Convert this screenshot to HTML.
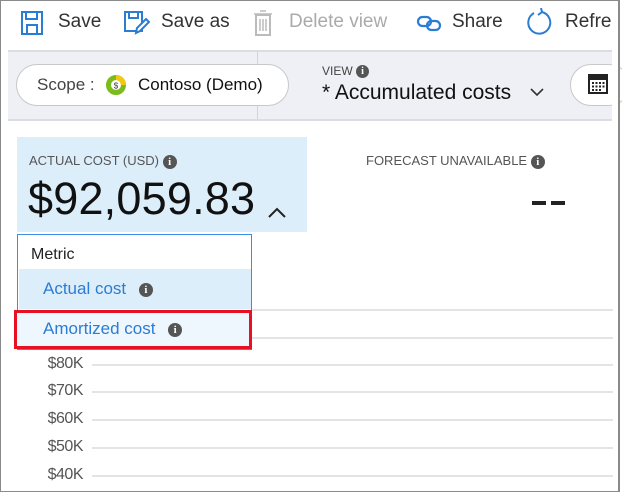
<!DOCTYPE html>
<html><head><meta charset="utf-8"><style>
*{margin:0;padding:0;box-sizing:border-box}
body{width:622px;height:493px;background:#fff;font-family:"Liberation Sans",sans-serif;position:relative;overflow:hidden}
.a{position:absolute;white-space:nowrap}
.frame{position:absolute;left:0;top:0;width:620px;height:492px;border:1px solid #8a8a8a;border-right:2px solid #8a8a8a}
.tb{font-size:19px;color:#333;top:11px}
.info{display:inline-block;width:14px;height:14px;border-radius:50%;background:#555;color:#fff;font:bold 11px/14px "Liberation Serif",serif;text-align:center;vertical-align:middle}
.grid{position:absolute;left:92px;width:521px;height:2px;background:#e4e4e4}
.yl{position:absolute;left:30px;width:53px;text-align:right;font-size:16px;color:#555;letter-spacing:-0.5px}
</style></head><body>
<svg class="a" style="left:21px;top:11px" width="22" height="24" viewBox="0 0 22 24"><rect x="1" y="1" width="20" height="22" fill="none" stroke="#2b7cd3" stroke-width="2"/><rect x="5" y="1" width="11" height="7" fill="none" stroke="#2b7cd3" stroke-width="2"/><rect x="6" y="14" width="10" height="9" fill="none" stroke="#2b7cd3" stroke-width="2"/></svg>
<div class="a tb" style="left:58px">Save</div>
<svg class="a" style="left:124px;top:11px" width="26" height="24" viewBox="0 0 26 24"><rect x="1" y="1" width="17" height="19" fill="none" stroke="#2b7cd3" stroke-width="2"/><rect x="5" y="1" width="9" height="6" fill="none" stroke="#2b7cd3" stroke-width="2"/><path d="M12 22 L13 17 L22 8 L25 11 L16 20 Z" fill="#fff" stroke="#2b7cd3" stroke-width="2"/></svg>
<div class="a tb" style="left:161px">Save as</div>
<svg class="a" style="left:254px;top:10px" width="18" height="26" viewBox="0 0 18 26"><rect x="2" y="5" width="14" height="20" fill="none" stroke="#bbb" stroke-width="2"/><path d="M0 4H18M6 1H12M6 9V21M9 9V21M12 9V21" stroke="#bbb" stroke-width="1.5"/></svg>
<div class="a tb" style="left:289px;color:#aaa">Delete view</div>
<svg class="a" style="left:416px;top:14px" width="26" height="18" viewBox="0 0 26 18"><rect x="2" y="3" width="13" height="9" rx="4.5" fill="none" stroke="#2b7cd3" stroke-width="2.2"/><rect x="11" y="7" width="13" height="9" rx="4.5" fill="none" stroke="#2b7cd3" stroke-width="2.2"/></svg>
<div class="a tb" style="left:452px">Share</div>
<svg class="a" style="left:525px;top:8px" width="28" height="30" viewBox="0 0 28 30"><path d="M9 5 A11 11 0 1 0 17 4" fill="none" stroke="#2b7cd3" stroke-width="2"/><path d="M16 0 L17 4 L13 7" fill="none" stroke="#2b7cd3" stroke-width="2"/></svg>
<div class="a tb" style="left:565px">Refre</div>
<div class="a" style="left:8px;top:50px;width:604px;height:71px;background:#eef0f6;border-top:2px solid #dcdde2;border-bottom:2px solid #dcdde2"></div>
<div class="a" style="left:257px;top:52px;width:1px;height:67px;background:#d4d4d8"></div>
<div class="a" style="left:16px;top:64px;width:273px;height:42px;border:1.5px solid #c8c8c8;border-radius:21px;background:#fff"></div>
<div class="a" style="left:37px;top:75px;font-size:17px;color:#444">Scope :</div>
<svg class="a" style="left:106px;top:75px" width="20" height="20" viewBox="0 0 20 20"><circle cx="10" cy="10" r="7.5" fill="none" stroke="#7cbb1c" stroke-width="5"/><path d="M10 2.5 A7.5 7.5 0 0 1 17.5 10" fill="none" stroke="#f2c811" stroke-width="5"/><text x="10" y="13.5" font-size="8" text-anchor="middle" font-family="Liberation Sans" fill="#333">$</text></svg>
<div class="a" style="left:138px;top:75px;font-size:17px;color:#111">Contoso (Demo)</div>
<div class="a" style="left:322px;top:64px;font-size:12px;color:#444">VIEW <span class="info" style="width:13px;height:13px;line-height:13px;font-size:10px">i</span></div>
<div class="a" style="left:322px;top:81px;font-size:21px;color:#111">* Accumulated costs</div>
<svg class="a" style="left:530px;top:88px" width="14" height="9" viewBox="0 0 14 9"><path d="M1 1 L7 7 L13 1" fill="none" stroke="#333" stroke-width="1.6"/></svg>
<div class="a" style="left:570px;top:64px;width:60px;height:42px;border:1.5px solid #c8c8c8;border-radius:21px;background:#fff"></div>
<svg class="a" style="left:588px;top:74px" width="20" height="20" viewBox="0 0 20 20"><rect x="1" y="1" width="18" height="18" fill="#fff" stroke="#222" stroke-width="2"/><rect x="1" y="1" width="18" height="5" fill="#222"/><g fill="#222"><rect x="4" y="8" width="2" height="2"/><rect x="7.5" y="8" width="2" height="2"/><rect x="11" y="8" width="2" height="2"/><rect x="14.5" y="8" width="2" height="2"/><rect x="4" y="11.5" width="2" height="2"/><rect x="7.5" y="11.5" width="2" height="2"/><rect x="11" y="11.5" width="2" height="2"/><rect x="14.5" y="11.5" width="2" height="2"/><rect x="4" y="15" width="2" height="2"/><rect x="7.5" y="15" width="2" height="2"/><rect x="11" y="15" width="2" height="2"/></g></svg>
<div class="a" style="left:612px;top:48px;width:8px;height:76px;background:#fff"></div>
<div class="a" style="left:17px;top:137px;width:290px;height:95px;background:#ddeefb"></div>
<div class="a" style="left:29px;top:153px;font-size:13px;color:#555">ACTUAL COST (USD) <span class="info">i</span></div>
<div class="a" style="left:28px;top:173px;font-size:45px;color:#111;letter-spacing:0.2px">$92,059.83</div>
<svg class="a" style="left:268px;top:207px" width="18" height="11" viewBox="0 0 18 11"><path d="M1 10 L9 2 L17 10" fill="none" stroke="#222" stroke-width="2"/></svg>
<div class="a" style="left:366px;top:153px;font-size:13px;color:#555">FORECAST UNAVAILABLE <span class="info">i</span></div>
<div class="a" style="left:532px;top:201px;width:14px;height:4px;background:#222"></div>
<div class="a" style="left:551px;top:201px;width:14px;height:4px;background:#222"></div>
<div class="grid" style="top:309px"></div>
<div class="grid" style="top:337px"></div>
<div class="grid" style="top:364px"></div><div class="yl" style="top:355px">$80K</div>
<div class="grid" style="top:391px"></div><div class="yl" style="top:382px">$70K</div>
<div class="grid" style="top:419px"></div><div class="yl" style="top:410px">$60K</div>
<div class="grid" style="top:447px"></div><div class="yl" style="top:438px">$50K</div>
<div class="grid" style="top:475px"></div><div class="yl" style="top:466px">$40K</div>
<div class="a" style="left:17px;top:234px;width:235px;height:116px;border:1.5px solid #3a8ee6;background:#fff"></div>
<div class="a" style="left:31px;top:246px;font-size:16px;color:#222">Metric</div>
<div class="a" style="left:19px;top:269px;width:232px;height:40px;background:#ddeefb"></div>
<div class="a" style="left:43px;top:279px;font-size:17px;color:#2b7cd3">Actual cost <span class="info" style="margin-left:8px">i</span></div>
<div class="a" style="left:14px;top:310px;width:238px;height:39px;border:3px solid #e81123;background:#eef6fe"></div>
<div class="a" style="left:43px;top:319px;font-size:17px;color:#2b7cd3">Amortized cost <span class="info" style="margin-left:8px">i</span></div>
<div class="frame"></div>
</body></html>
